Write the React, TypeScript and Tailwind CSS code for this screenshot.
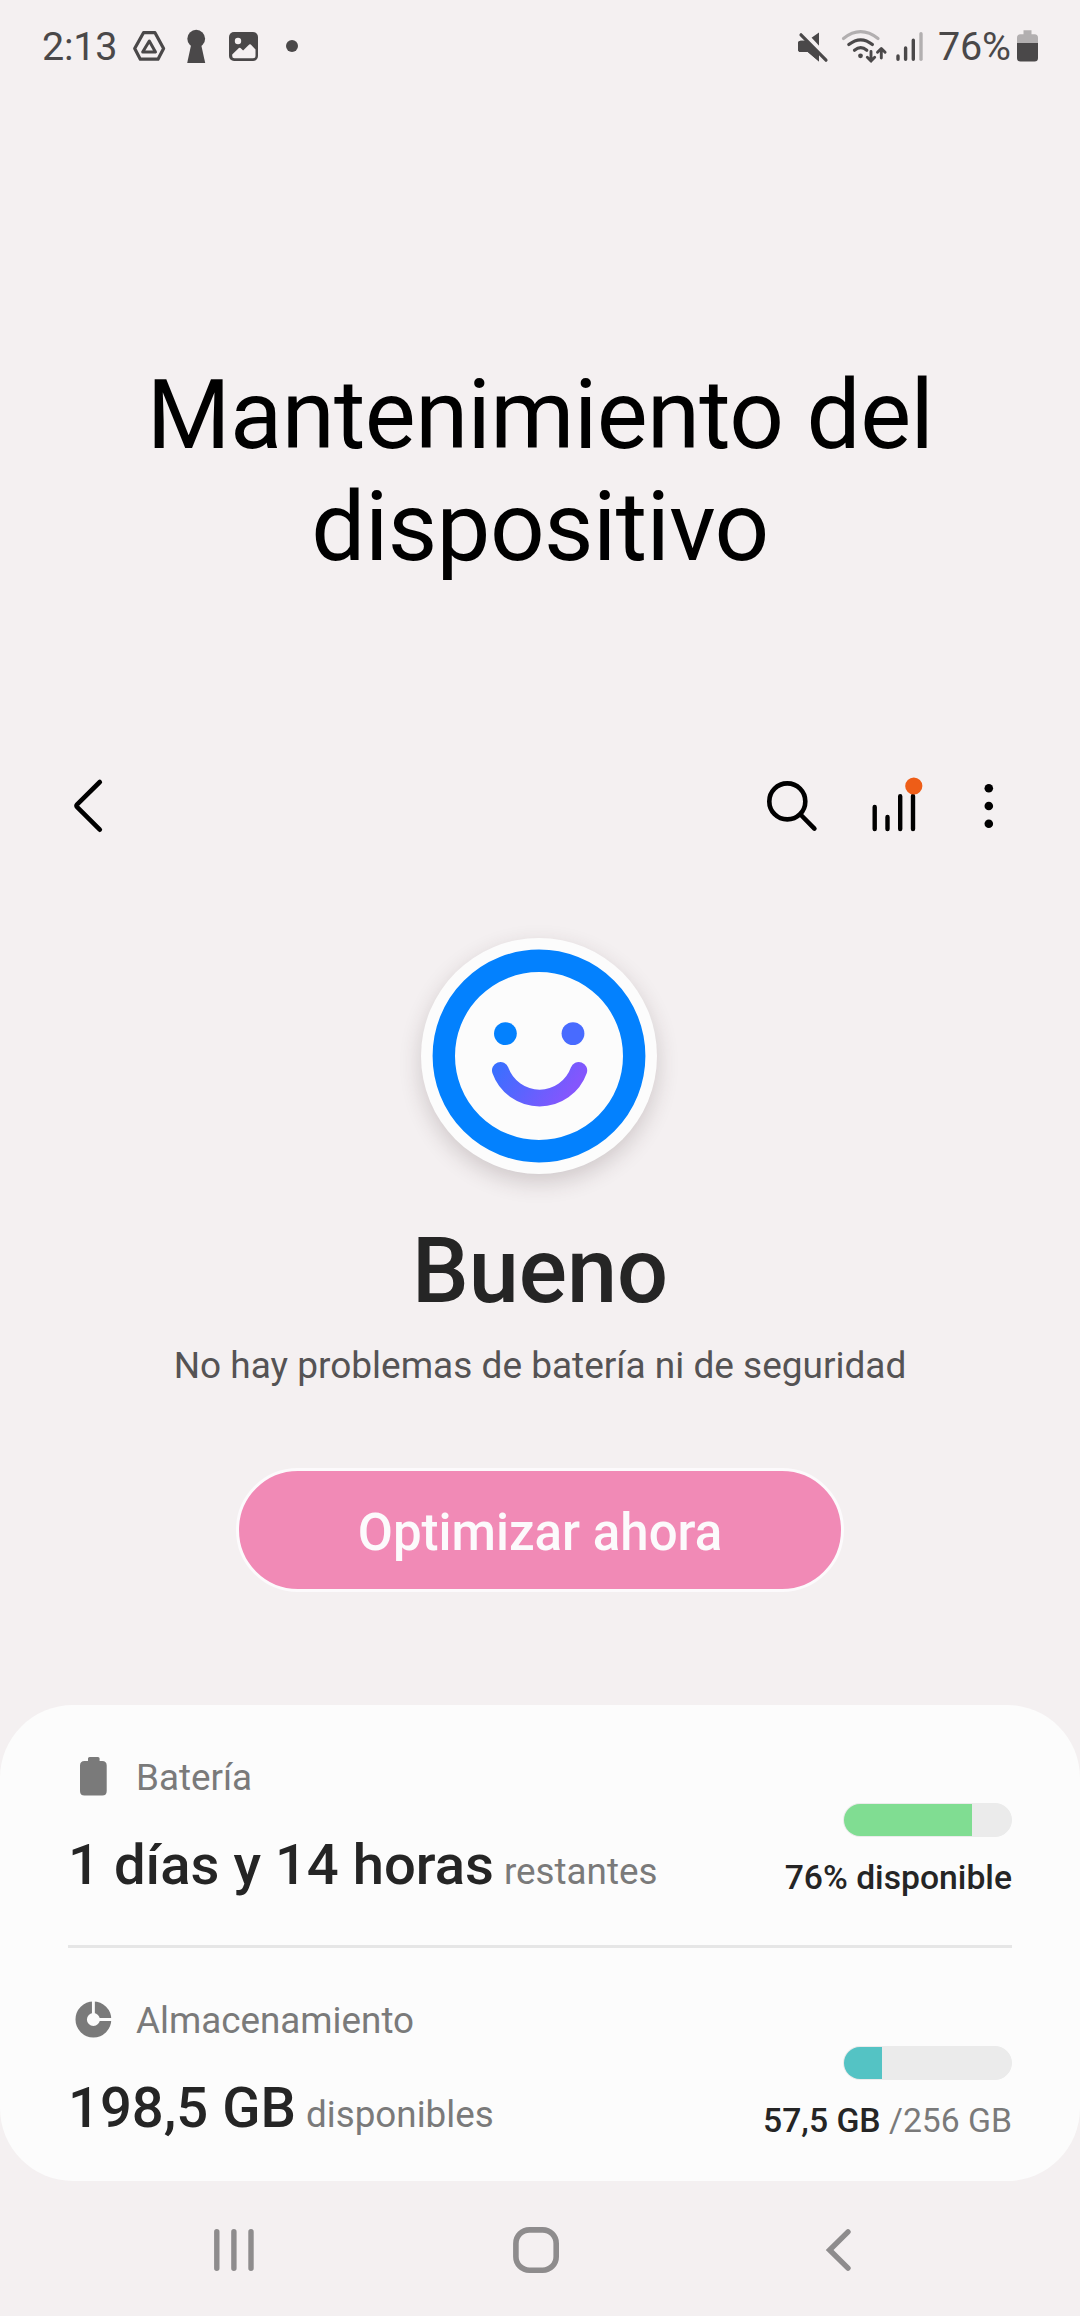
import type { ReactNode } from "react";

const DARK = "#4a4849";
const FAINT = "#b2afb0";

function StatusBar() {
  return (
    <header className="flex h-[92px] items-start justify-between pt-[22px] pr-[42px] pl-[42px] text-[39.5px] leading-[50px] tracking-[-0.2px] text-[#4a4849]">
      <div className="flex items-start">
        <span className="w-[82px] whitespace-nowrap">2:13</span>
        <svg className="ml-[8px] h-[44px] w-[36px]" viewBox="132 22 36 44" fill="none" stroke={DARK} strokeLinejoin="round">
          <path d="M143.5 32.7h11.5l8.6 15.8-5.6 10.7h-17.7l-5.6-10.7z" strokeWidth="3.2" />
          <path d="M149.3 41l6.2 11h-12.8z" strokeWidth="3" />
        </svg>
        <svg className="ml-[17px] h-[44px] w-[22px]" viewBox="185 22 22 44" fill={DARK}>
          <circle cx="196.2" cy="38.7" r="8.9" />
          <path d="M191.4 43.5h9.5l4.3 19.5h-18z" />
        </svg>
        <svg className="ml-[20px] h-[44px] w-[34px]" viewBox="227 22 34 44">
          <rect x="229" y="32" width="29" height="29" rx="5" fill={DARK} />
          <circle cx="238" cy="41" r="3.2" fill="#f4f0f1" />
          <path d="M232.2 54.4l6.7-6.4q.8-.7 1.6 0l2.6 2.6 6.1-6q.8-.8 1.6 0l4.7 4.8v6.6q0 2.3-2.4 2.3h-18.6q-2.3 0-2.3-2.3z" fill="#f4f0f1" />
        </svg>
        <svg className="ml-[23px] h-[44px] w-[16px]" viewBox="284 22 16 44" fill={DARK}>
          <circle cx="292" cy="46" r="6" />
        </svg>
      </div>
      <div className="flex items-start">
        <svg className="h-[44px] w-[34px]" viewBox="796 22 34 44">
          <path d="M819 32.4v29.2l-11.2-9.6h-7q-2.8 0-2.8-2.8v-5.6q0-2.8 2.8-2.8h6.4z" fill={DARK} />
          <path d="M800 30l28 30" stroke="#f4f0f1" strokeWidth="6.5" />
          <path d="M798 43.6q0-2.8 2.8-2.8h6l12.2 12v8.8l-11.2-9.6h-7q-2.8 0-2.8-2.8z" fill={DARK} />
          <path d="M801 34.8l25 25.4" stroke={DARK} strokeWidth="3.2" strokeLinecap="round" />
        </svg>
        <svg className="ml-[10px] h-[44px] w-[50px]" viewBox="840 22 50 44" fill="none" stroke={DARK} strokeWidth="3.2" strokeLinecap="round" strokeLinejoin="round">
          <path d="M843.5 38.5q17-13.6 34.5 0" stroke={FAINT} />
          <path d="M848.8 44.6q12-9.6 23.6 0" />
          <path d="M854.5 50.2q6.3-5 12.3 0" />
          <circle cx="860.5" cy="55.8" r="2.4" fill={DARK} stroke="none" />
          <path d="M871 51.5v9.5m-3.7-3.7l3.7 3.8 3.7-3.8M881.3 58v-9m-3.8 3.3l3.8-3.8 3.8 3.8" strokeWidth="2.9" />
        </svg>
        <svg className="ml-[4px] h-[44px] w-[32px]" viewBox="894 22 32 44" strokeWidth="3.4" strokeLinecap="round" stroke={DARK}>
          <path d="M898 56v3.2M905.6 48v11.2M913.3 40.3v18.9" />
          <path d="M921 33.7v25.5" stroke={FAINT} />
        </svg>
        <span className="ml-[12px] w-[75px] whitespace-nowrap">76%</span>
        <svg className="ml-[2px] h-[44px] w-[23px]" viewBox="1015 22 23 44">
          <path d="M1023.5 30.3h8v4h3q3.5 0 3.5 3.5v5.2h-21v-5.2q0-3.5 3.5-3.5h3z" fill={FAINT} />
          <path d="M1017 43h21v15q0 3.5-3.5 3.5h-14q-3.5 0-3.5-3.5z" fill={DARK} />
        </svg>
      </div>
    </header>
  );
}

function Toolbar() {
  return (
    <nav className="mt-[163px] flex h-[120px] items-center justify-between pr-[76px] pl-[66px]">
      <button aria-label="Atrás">
        <svg className="block h-[60px] w-[44px]" viewBox="66 776 44 60" fill="none" stroke="#000" strokeWidth="4.6" strokeLinecap="round" strokeLinejoin="round">
          <path d="M99.8 782L77.2 804.3q-1.3 1.4 0 2.8L99.8 829.7" />
        </svg>
      </button>
      <div className="flex items-center">
        <button aria-label="Buscar">
          <svg className="block h-[60px] w-[60px]" viewBox="760 776 60 60" fill="none" stroke="#000" strokeWidth="4.6" strokeLinecap="round">
            <circle cx="787.3" cy="801.4" r="18" />
            <path d="M801 815l13.4 13.6" />
          </svg>
        </button>
        <button className="ml-[45px]" aria-label="Estadísticas">
          <svg className="block h-[60px] w-[60px]" viewBox="865 776 60 60" stroke="#000" strokeWidth="4.4" strokeLinecap="round">
            <path d="M874.7 807v22M887.5 817v12M900.2 796.3v32.7M913 796v33" />
            <circle cx="913.8" cy="786" r="8.6" fill="#ee5d17" stroke="none" />
          </svg>
        </button>
        <button className="ml-[51px]" aria-label="Más opciones">
          <svg className="block h-[60px] w-[28px]" viewBox="976 776 28 60" fill="#000">
            <circle cx="988.8" cy="788.2" r="4.3" />
            <circle cx="988.8" cy="806" r="4.3" />
            <circle cx="988.8" cy="823.7" r="4.3" />
          </svg>
        </button>
      </div>
    </nav>
  );
}

function Face() {
  return (
    <div className="mt-[72px] mr-[2px] h-[236px] w-[236px] rounded-full bg-[#fcfcfc] shadow-[0_8px_22px_rgba(60,40,45,0.2)]">
      <svg className="block h-[236px] w-[236px]" viewBox="421 938 236 236" fill="none">
        <defs>
          <linearGradient id="smile" gradientUnits="userSpaceOnUse" x1="497" y1="1066" x2="560" y2="1108">
            <stop offset="0" stopColor="#3a6fff" />
            <stop offset="1" stopColor="#8456fd" />
          </linearGradient>
        </defs>
        <circle cx="539" cy="1056" r="95.2" stroke="#0381fe" strokeWidth="22.4" />
        <circle cx="505.4" cy="1033.6" r="11.4" fill="#0381fe" />
        <circle cx="573" cy="1033.6" r="11.4" fill="#486bff" />
        <path d="M500.4 1070.4a41.6 41.6 0 0 0 78.4 0" stroke="url(#smile)" strokeWidth="16.8" strokeLinecap="round" />
      </svg>
    </div>
  );
}

type RowProps = {
  icon: ReactNode;
  label: string;
  value: string;
  unit: string;
  percent: number;
  barClass: string;
  used: string;
  total?: string;
};

function UsageRow({ icon, label, value, unit, percent, barClass, used, total }: RowProps) {
  return (
    <section className="flex h-[240px] justify-between whitespace-nowrap">
      <div className="pt-[50px]">
        <div className="flex h-[44px] items-center text-[36.8px] leading-[44px] text-[#7a7a7a]">
          {icon}
          <span className="ml-[17px] pt-[2px]">{label}</span>
        </div>
        <p className="mt-[33px] text-[56.2px] leading-[66px] font-medium text-[#252525]">
          {value}
          <span className="ml-[10px] text-[36.8px] font-normal text-[#7a7a7a]">{unit}</span>
        </p>
      </div>
      <div className="flex flex-col items-end pt-[98px]">
        <div className="h-[34px] w-[169px] overflow-hidden rounded-full border border-[#ebebeb] bg-[#ebebeb]">
          <div className={"h-full " + barClass} style={{ width: `${percent}%` }} />
        </div>
        <p className="mt-[21px] text-[33.7px] leading-[40px] font-medium text-[#252525]">
          {used}
          {total && <span className="font-normal text-[#7a7a7a]"> {total}</span>}
        </p>
      </div>
    </section>
  );
}

export default function App() {
  return (
    <div className="flex h-[2316px] w-[1080px] flex-col overflow-hidden bg-[#f4f0f1] font-['Roboto',sans-serif]">
      <StatusBar />
      <h1 className="mt-[267px] text-center text-[96px] leading-[112px] tracking-[-0.6px] text-black">
        Mantenimiento del
        <br />
        dispositivo
      </h1>
      <Toolbar />
      <main className="flex flex-col items-center">
        <Face />
        <h2 className="mt-[46px] text-[90px] leading-[104px] font-medium text-[#252525]">Bueno</h2>
        <p className="mt-[20px] text-[37px] leading-[44px] text-[#555354]">No hay problemas de batería ni de seguridad</p>
        <button className="mt-[80px] flex h-[124px] w-[608px] items-center justify-center rounded-full border-[3px] border-[#fcfafc] bg-[#f18ab6] pt-[7px] text-[51px] font-medium text-[#fcfafc]">
          Optimizar ahora
        </button>
      </main>
      <div className="mt-[113px] h-[476px] rounded-[73px] bg-[#fcfcfc] px-[68px]">
        <UsageRow
          icon={
            <svg className="block h-[44px] w-[51px]" viewBox="68 1754 51 44" fill="#7a7a7a">
              <path d="M88 1760v-2.4q0-1.6 1.6-1.6h8.4q1.6 0 1.6 1.6v2.4h2.6q4.5 0 4.5 4.5v25.6q0 4.5-4.5 4.5h-17.7q-4.5 0-4.5-4.5v-25.6q0-4.5 4.5-4.5z" />
            </svg>
          }
          label="Batería"
          value="1 días y 14 horas"
          unit="restantes"
          percent={76.5}
          barClass="bg-[#80dd92]"
          used="76% disponible"
        />
        <div className="h-[3px] bg-[#e6e6e6]" />
        <UsageRow
          icon={
            <svg className="block h-[44px] w-[51px]" viewBox="68 1997 51 44">
              <circle cx="93.4" cy="2018.5" r="12.2" fill="none" stroke="#7a7a7a" strokeWidth="11.4" />
              <path d="M93.4 2018.5V1999M93.4 2018.5H114" stroke="#fcfcfc" strokeWidth="2.9" />
            </svg>
          }
          label="Almacenamiento"
          value="198,5 GB"
          unit="disponibles"
          percent={22.8}
          barClass="bg-[#54c3c4]"
          used="57,5 GB"
          total="/256 GB"
        />
      </div>
      <footer className="flex h-[135px] items-center pt-[3px] pl-[208px]">
        <svg className="h-[52px] w-[52px]" viewBox="208 2224 52 52" stroke="#8e8c8d" strokeWidth="5.4" strokeLinecap="round">
          <path d="M216.8 2231.8v36.4M233.9 2231.8v36.4M251 2231.8v36.4" />
        </svg>
        <svg className="ml-[250px] h-[52px] w-[52px]" viewBox="510 2224 52 52" fill="none" stroke="#8e8c8d" strokeWidth="5.6">
          <rect x="515.9" y="2229.9" width="40.3" height="40.3" rx="13.5" />
        </svg>
        <svg className="ml-[255px] h-[52px] w-[40px]" viewBox="817 2224 40 52" fill="none" stroke="#8e8c8d" strokeWidth="5.4" strokeLinecap="round">
          <path d="M848 2231.8L829.6 2250L848 2268.2" />
        </svg>
      </footer>
    </div>
  );
}
